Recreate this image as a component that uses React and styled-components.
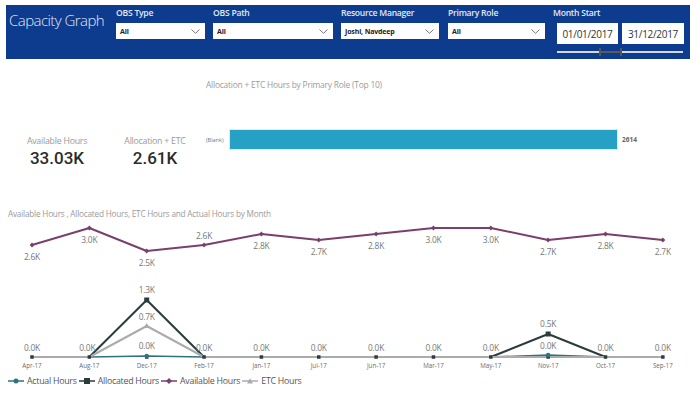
import React from 'react';
import styled, { createGlobalStyle } from 'styled-components';

const GlobalStyle = createGlobalStyle`
  html, body { margin: 0; padding: 0; background: #fff; }
  body {
    font-family: "Open Sans", "Liberation Sans", sans-serif;
    width: 700px; height: 401px; overflow: hidden;
  }
`;

const Page = styled.div`
  width: 700px;
  height: 401px;
  display: flex;
  flex-direction: column;
`;

const Header = styled.header`
  margin: 5px 10px 0 6px;
  height: 54px;
  background: #0d3b8e;
  display: flex;
  align-items: flex-start;
`;

const Title = styled.h1`
  margin: 0;
  width: 110px;
  padding: 5px 0 0 3px;
  box-sizing: border-box;
  font-weight: 300;
  font-size: 15px;
  line-height: 20px;
  color: #e2e8f3;
  letter-spacing: -0.55px;
  white-space: nowrap;
`;

const Filter = styled.div`
  width: ${p => p.$w}px;
  margin-left: ${p => p.$gap}px;
  display: flex;
  flex-direction: column;
`;

const FilterLabel = styled.div`
  margin-top: 2px;
  height: 12px;
  line-height: 12px;
  font-size: 8.6px;
  font-weight: 600;
  color: #e3e9f4;
  white-space: nowrap;
  letter-spacing: -0.25px;
`;

const Dropdown = styled.div`
  margin-top: 4px;
  height: 16px;
  background: #fff;
  display: flex;
  align-items: center;
  justify-content: space-between;
  padding: 0 5px 0 4px;
  box-sizing: border-box;
`;

const DropText = styled.span`
  font-size: 7px;
  font-weight: 700;
  color: #222;
  letter-spacing: -0.15px;
`;

const DateRow = styled.div`
  margin: 4px 0 0 4px;
  display: flex;
  gap: 4px;
`;

const DateBox = styled.div`
  width: ${p => p.$w}px;
  height: 21px;
  background: #fff;
  display: flex;
  align-items: center;
  justify-content: center;
  font-size: 10px;
  color: #333;
  letter-spacing: -0.3px;
`;

const Slider = styled.div`
  position: relative;
  margin: 7px 0 0 4px;
  width: 126px;
  height: 2px;
  background: #d4d8df;
`;

const SliderRange = styled.div`
  position: absolute;
  top: 0;
  height: 2px;
  background: #5a5a5a;
`;

const SliderHandle = styled.div`
  position: absolute;
  top: -3px;
  width: 2px;
  height: 8px;
  background: #555;
`;

const TopSection = styled.section`
  height: 146px;
  display: flex;
`;

const Cards = styled.div`
  width: 198px;
  padding: 76px 0 0 8px;
  display: flex;
  align-items: flex-start;
`;

const Card = styled.div`
  width: 98px;
  display: flex;
  flex-direction: column;
  align-items: center;
`;

const CardLabel = styled.div`
  font-size: 8.8px;
  line-height: 12px;
  color: #9a9a9a;
  white-space: nowrap;
  letter-spacing: -0.25px;
`;

const CardValue = styled.div`
  margin-top: 1px;
  font-family: Roboto, "Open Sans", sans-serif;
  font-weight: 500;
  font-size: 17px;
  line-height: 20px;
  color: #2b2b2b;
`;

const BarChart = styled.div`
  flex: 1;
  display: flex;
  flex-direction: column;
  padding-top: 20px;
`;

const ChartTitle = styled.div`
  font-size: ${p => p.$size || 8.4}px;
  line-height: 12px;
  color: #9b9b9b;
  white-space: nowrap;
  letter-spacing: -0.2px;
  margin-left: ${p => p.$left || 0}px;
  margin-top: ${p => p.$top || 0}px;
`;

const BarRow = styled.div`
  margin-top: 39px;
  display: flex;
  align-items: center;
  height: 19px;
`;

const BarLabel = styled.span`
  width: 24px;
  font-size: 5.5px;
  color: #777;
  white-space: nowrap;
`;

const Bar = styled.div`
  height: 19px;
  background: #27a0c5;
  box-shadow: 0 0 0 1px #d7eef6;
`;

const BarValue = styled.span`
  margin-left: 5px;
  font-size: 6.5px;
  font-weight: 700;
  color: #666;
`;

const LineSection = styled.section`
  display: flex;
  flex-direction: column;
`;

const Legend = styled.div`
  height: 16px;
  padding-left: 8px;
  display: flex;
  align-items: center;
`;

const LegendItem = styled.div`
  display: flex;
  align-items: center;
  margin-right: 2px;
  font-size: 8.8px;
  color: #555;
  white-space: nowrap;
  letter-spacing: -0.25px;
`;

const LegendText = styled.span`
  margin-left: 3px;
`;

const Chevron = () => (
  <svg width="9" height="5" viewBox="0 0 9 5">
    <path d="M0.5 0.5 L4.5 4.3 L8.5 0.5" fill="none" stroke="#777" strokeWidth="1" />
  </svg>
);

const filters = [
  { label: 'OBS Type', value: 'All', w: 89, gap: 0 },
  { label: 'OBS Path', value: 'All', w: 120, gap: 8 },
  { label: 'Resource Manager', value: 'Joshi, Navdeep', w: 98, gap: 8 },
  { label: 'Primary Role', value: 'All', w: 97, gap: 9 },
];

const months = ['Apr-17', 'Aug-17', 'Dec-17', 'Feb-17', 'Jan-17', 'Jul-17', 'Jun-17', 'Mar-17', 'May-17', 'Nov-17', 'Oct-17', 'Sep-17'];
const xs = months.map((_, i) => 32 + i * 57.35);
const BASE = 357;

const available = [
  ['2.6K', 245], ['3.0K', 228], ['2.5K', 251], ['2.6K', 245, true], ['2.8K', 234], ['2.7K', 240],
  ['2.8K', 234], ['3.0K', 228], ['3.0K', 228], ['2.7K', 240], ['2.8K', 234], ['2.7K', 240],
];
const allocated = months.map((_, i) => (i === 2 ? 300 : i === 9 ? 334 : BASE));
const etc = months.map((_, i) => (i === 2 ? 326 : BASE));
const actual = months.map((_, i) => (i === 2 ? 356 : i === 9 ? 355 : BASE));

const pts = ys => ys.map((y, i) => `${xs[i]},${y}`).join(' ');

const COLORS = {
  actual: '#2f737c',
  allocated: '#2b3c3c',
  available: '#7a3f6d',
  etc: '#ababab',
};

const Diamond = ({ x, y, s = 2.4, color }) => (
  <polygon points={`${x},${y - s} ${x + s},${y} ${x},${y + s} ${x - s},${y}`} fill={color} />
);
const Square = ({ x, y, s = 5, color }) => (
  <rect x={x - s / 2} y={y - s / 2} width={s} height={s} fill={color} />
);
const Tri = ({ x, y, s = 3, color }) => (
  <polygon points={`${x},${y - s} ${x + s},${y + s * 0.7} ${x - s},${y + s * 0.7}`} fill={color} />
);

const labelStyle = { fontSize: 8.4, fill: '#777', fontFamily: '"Open Sans", sans-serif', letterSpacing: '-0.2px' };
const monthStyle = { fontSize: 6.2, fill: '#6a6a6a', fontFamily: '"Open Sans", sans-serif' };

const LineChart = () => (
  <svg width="700" height="153" viewBox="0 220 700 153">
    <polyline points={pts(available.map(a => a[1]))} fill="none" stroke={COLORS.available} strokeWidth="2" strokeLinejoin="round" />
    {available.map((a, i) => (
      <Diamond key={i} x={xs[i]} y={a[1]} color={COLORS.available} />
    ))}
    {available.map((a, i) => (
      <text key={i} x={xs[i]} y={a[2] ? a[1] - 6 : a[1] + 15} textAnchor="middle" style={labelStyle}>{a[0]}</text>
    ))}

    <polyline points={pts(actual)} fill="none" stroke={COLORS.actual} strokeWidth="1.5" />
    <polyline points={pts(allocated)} fill="none" stroke={COLORS.allocated} strokeWidth="2" strokeLinejoin="round" />
    <polyline points={pts(etc)} fill="none" stroke={COLORS.etc} strokeWidth="2" strokeLinejoin="round" />

    {months.map((_, i) => (
      <Square key={`b${i}`} x={xs[i]} y={BASE} s={3.5} color={COLORS.allocated} />
    ))}
    <Square x={xs[2]} y={300} color={COLORS.allocated} />
    <Square x={xs[9]} y={334} color={COLORS.allocated} />
    <Tri x={xs[2]} y={326} color={COLORS.etc} />
    <circle cx={xs[2]} cy={356} r="2.2" fill={COLORS.actual} />
    <circle cx={xs[9]} cy={355} r="2.2" fill={COLORS.actual} />

    {months.map((m, i) => (
      <text key={`l${i}`} x={i === 1 ? xs[i] - 2 : xs[i]} y={i === 2 || i === 9 ? 349 : 351} textAnchor="middle" style={labelStyle}>0.0K</text>
    ))}
    <text x={xs[2]} y={293} textAnchor="middle" style={labelStyle}>1.3K</text>
    <text x={xs[2]} y={320} textAnchor="middle" style={labelStyle}>0.7K</text>
    <text x={xs[9]} y={327} textAnchor="middle" style={labelStyle}>0.5K</text>

    {months.map((m, i) => (
      <text key={`m${i}`} x={xs[i]} y={368} textAnchor="middle" style={monthStyle}>{m}</text>
    ))}
  </svg>
);

const LegendMark = ({ kind, color }) => (
  <svg width="16" height="8" viewBox="0 0 16 8">
    <line x1="0" y1="4" x2="16" y2="4" stroke={color} strokeWidth="1.5" />
    {kind === 'circle' && <circle cx="8" cy="4" r="2.5" fill={color} />}
    {kind === 'square' && <rect x="5" y="1" width="6" height="6" fill={color} />}
    {kind === 'diamond' && <polygon points="8,1 11,4 8,7 5,4" fill={color} />}
    {kind === 'tri' && <polygon points="8,1.2 11,6.5 5,6.5" fill={color} />}
  </svg>
);

const legend = [
  { kind: 'circle', color: COLORS.actual, text: 'Actual Hours' },
  { kind: 'square', color: COLORS.allocated, text: 'Allocated Hours' },
  { kind: 'diamond', color: COLORS.available, text: 'Available Hours' },
  { kind: 'tri', color: COLORS.etc, text: 'ETC Hours' },
];

const bars = [{ label: '(Blank)', value: 2614 }];
const BAR_MAX = 2614;
const BAR_WIDTH = 387;

export default function App() {
  return (
    <Page>
      <GlobalStyle />
      <Header>
        <Title>Capacity Graph</Title>
        {filters.map(f => (
          <Filter key={f.label} $w={f.w} $gap={f.gap}>
            <FilterLabel>{f.label}</FilterLabel>
            <Dropdown>
              <DropText>{f.value}</DropText>
              <Chevron />
            </Dropdown>
          </Filter>
        ))}
        <Filter $w={137} $gap={8}>
          <FilterLabel>Month Start</FilterLabel>
          <DateRow>
            <DateBox $w={61}>01/01/2017</DateBox>
            <DateBox $w={62}>31/12/2017</DateBox>
          </DateRow>
          <Slider>
            <SliderRange style={{ left: 43, width: 21 }} />
            <SliderHandle style={{ left: 42 }} />
            <SliderHandle style={{ left: 63 }} />
          </Slider>
        </Filter>
      </Header>

      <TopSection>
        <Cards>
          <Card>
            <CardLabel>Available Hours</CardLabel>
            <CardValue>33.03K</CardValue>
          </Card>
          <Card>
            <CardLabel>Allocation + ETC</CardLabel>
            <CardValue>2.61K</CardValue>
          </Card>
        </Cards>
        <BarChart>
          <ChartTitle>Allocation + ETC Hours by Primary Role (Top 10)</ChartTitle>
          {bars.map(b => (
            <BarRow key={b.label}>
              <BarLabel>{b.label}</BarLabel>
              <Bar style={{ width: (b.value / BAR_MAX) * BAR_WIDTH }} />
              <BarValue>{b.value}</BarValue>
            </BarRow>
          ))}
        </BarChart>
      </TopSection>

      <LineSection>
        <ChartTitle $left={8} $top={3} $size={8.2}>Available Hours , Allocated Hours, ETC Hours and Actual Hours by Month</ChartTitle>
        <LineChart />
        <Legend>
          {legend.map(l => (
            <LegendItem key={l.text}>
              <LegendMark kind={l.kind} color={l.color} />
              <LegendText>{l.text}</LegendText>
            </LegendItem>
          ))}
        </Legend>
      </LineSection>
    </Page>
  );
}
